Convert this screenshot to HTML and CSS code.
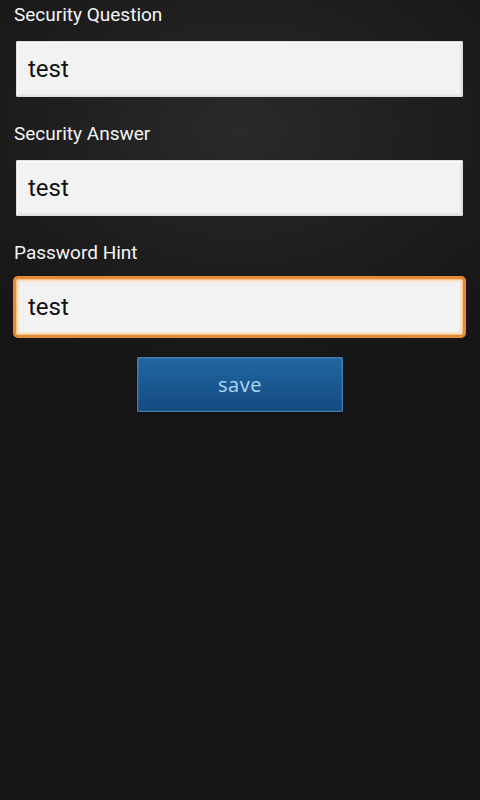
FILE: index.html
```html
<!DOCTYPE html>
<html lang="en">
<head>
<meta charset="UTF-8">
<meta name="viewport" content="width=device-width, initial-scale=1.0">
<title>Security Settings</title>
<link rel="stylesheet" href="styles.css">
</head>
<body>

<form class="security-form" id="securityForm">
  <div class="form-group">
    <label for="question">Security Question</label>
    <input type="text" id="question" name="question" value="test">
  </div>
  <div class="form-group">
    <label for="answer">Security Answer</label>
    <input type="text" id="answer" name="answer" value="test">
  </div>
  <div class="form-group">
    <label for="hint">Password Hint</label>
    <input type="text" id="hint" name="hint" value="test" class="focused">
  </div>
  <div class="button-row">
    <button type="submit" class="save-button">save</button>
  </div>
</form>

</body>
</html>
```

FILE: styles.css
```css
body, html {
  margin: 0;
  height: 100%;
}
body {
  font-family: Roboto, "Liberation Sans", sans-serif;
  background-color: #161616;
  background-image: radial-gradient(ellipse 360px 250px at 50% 130px, #2a2a2a 0%, #1d1d1d 60%, #161616 100%);
  background-repeat: no-repeat;
  color: #f0f0f0;
}
.security-form {
  padding: 4px 17px 0 14px;
}
.form-group {
  display: flex;
  flex-direction: column;
  margin-bottom: 26px;
}
.form-group label {
  font-size: 19px;
  line-height: 22px;
  margin-bottom: 15px;
  color: #f4f4f4;
}
.form-group input {
  box-sizing: border-box;
  margin-left: 2px;
  height: 56px;
  padding: 0 11px;
  border: 1px solid #dcdcdc;
  border-radius: 1px;
  background-color: #f2f2f2;
  box-shadow: inset 1px 1px 0 #fcfcfc, inset -2px -2px 0 #e6e6e6;
  font-family: Roboto, "Liberation Sans", sans-serif;
  font-size: 24px;
  color: #111;
  outline: none;
}
.form-group input.focused {
  border: 1px solid #f7c38a;
  box-shadow: 0 0 0 3px #e38b35, inset 0 0 0 2px #fbe2c4;
  border-radius: 2px;
}
.button-row {
  display: flex;
  justify-content: center;
  padding-left: 3px;
  margin-top: -4px;
}
.save-button {
  width: 206px;
  height: 55px;
  border: 1px solid #4580b5;
  border-radius: 1px;
  background: linear-gradient(#2266a2 0%, #1b5a94 45%, #144a80 100%);
  box-shadow: 0 0 2px #000, inset 0 0 0 1px rgba(255, 255, 255, 0.06);
  color: #b0d8f6;
  font-family: "Open Sans", Roboto, sans-serif;
  font-size: 20px;
  letter-spacing: 0.5px;
  cursor: pointer;
}
```
